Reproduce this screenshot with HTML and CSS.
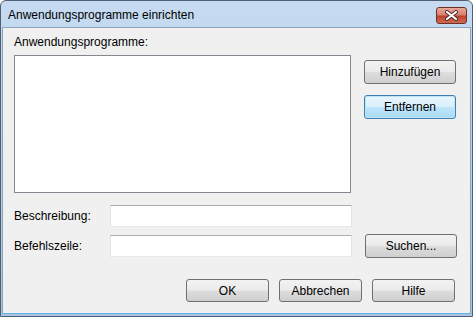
FILE: index.html
```html
<!DOCTYPE html>
<html lang="de">
<head>
    <meta charset="UTF-8">
    <title>Anwendungsprogramme einrichten</title>
    <link rel="stylesheet" href="styles.css">
</head>
<body>
    <div class="window">
        <!-- Titelleiste -->
        <div class="titlebar">
            <span class="title">Anwendungsprogramme einrichten</span>
            <div class="close-btn">
                <svg width="15" height="11" viewBox="0 0 15 11">
                    <path d="M3 2 L12 9 M12 2 L3 9" stroke="#4a2a26" stroke-width="4" stroke-linecap="round"/>
                    <path d="M3 2 L12 9 M12 2 L3 9" stroke="#ffffff" stroke-width="2.2" stroke-linecap="round"/>
                </svg>
            </div>
        </div>

        <div class="client">
            <div class="top">
                <div class="list-area">
                    <div class="label">Anwendungsprogramme:</div>
                    <div class="listbox"></div>
                </div>
                <div class="side-buttons">
                    <button class="btn side">Hinzufügen</button>
                    <button class="btn side default">Entfernen</button>
                </div>
            </div>

            <div class="row first">
                <div class="row-label">Beschreibung:</div>
                <div class="textbox"></div>
            </div>
            <div class="row">
                <div class="row-label">Befehlszeile:</div>
                <div class="textbox"></div>
                <button class="btn side">Suchen...</button>
            </div>

            <div class="footer">
                <button class="btn foot">OK</button>
                <button class="btn foot">Abbrechen</button>
                <button class="btn foot">Hilfe</button>
            </div>
        </div>
    </div>
</body>
</html>
```

FILE: styles.css
```css
body {
    margin: 0;
    padding: 0;
    font-family: "Liberation Sans", Arial, sans-serif;
    font-size: 12px;
    color: #000;
    background: #fff;
}
.window {
    width: 473px;
    height: 317px;
    box-sizing: border-box;
    border: 1px solid #4f5f70;
    border-radius: 6px 6px 0 0;
    background: linear-gradient(#c6dbf1, #a9c5e4);
    display: flex;
    flex-direction: column;
    overflow: hidden;
}
.titlebar {
    height: 26px;
    display: flex;
    align-items: center;
    padding: 0 5px 0 7px;
    flex-shrink: 0;
}
.title {
    flex: 1;
    color: #000;
    padding-top: 1px;
}
.close-btn {
    width: 31px;
    height: 17px;
    box-sizing: border-box;
    border: 1px solid #6e2f28;
    border-radius: 3px;
    background: linear-gradient(#eaa99b 0%, #d9806e 45%, #c0412d 55%, #d06a52 100%);
    display: flex;
    align-items: center;
    justify-content: center;
    margin-top: 2px;
}
.client {
    flex: 1;
    margin: 0 1px 2px 1px;
    border: 1px solid #8aa3bf;
    border-bottom-color: #5cb3e4;
    background: #f0f0f0;
    padding: 7px 12px 0 11px;
}
.top {
    display: flex;
}
.list-area {
    width: 337px;
}
.label {
    line-height: 15px;
}
.listbox {
    margin-top: 5px;
    height: 138px;
    box-sizing: border-box;
    border: 1px solid #828790;
    background: #fff;
}
.side-buttons {
    margin-left: 13px;
    padding-top: 25px;
    display: flex;
    flex-direction: column;
    gap: 11px;
}
.btn {
    font-family: "Liberation Sans", Arial, sans-serif;
    font-size: 12px;
    color: #000;
    height: 24px;
    box-sizing: border-box;
    border: 1px solid #707070;
    border-radius: 3px;
    background: linear-gradient(#f2f2f2 0%, #ebebeb 48%, #dddddd 52%, #cfcfcf 100%);
    padding: 0;
}
.btn.side {
    width: 92px;
}
.btn.default {
    border-color: #3c7fb1;
    background: linear-gradient(#eaf6fd 0%, #d9f0fc 48%, #bee6fd 52%, #a7d9f5 100%);
    box-shadow: inset 0 0 0 1px #bfe4f8;
}
.row {
    display: flex;
    align-items: center;
    height: 24px;
    margin-top: 6px;
}
.row.first {
    margin-top: 11px;
}
.row-label {
    width: 96px;
}
.textbox {
    width: 242px;
    height: 22px;
    box-sizing: border-box;
    border: 1px solid #e2e3ea;
    border-top-color: #abadb3;
    border-bottom-color: #e3e9ef;
    background: #fff;
    margin-right: 13px;
}
.footer {
    display: flex;
    justify-content: flex-end;
    gap: 10px;
    margin-top: 21px;
    padding-right: 3px;
}
.btn.foot {
    width: 83px;
    height: 23px;
}
```
